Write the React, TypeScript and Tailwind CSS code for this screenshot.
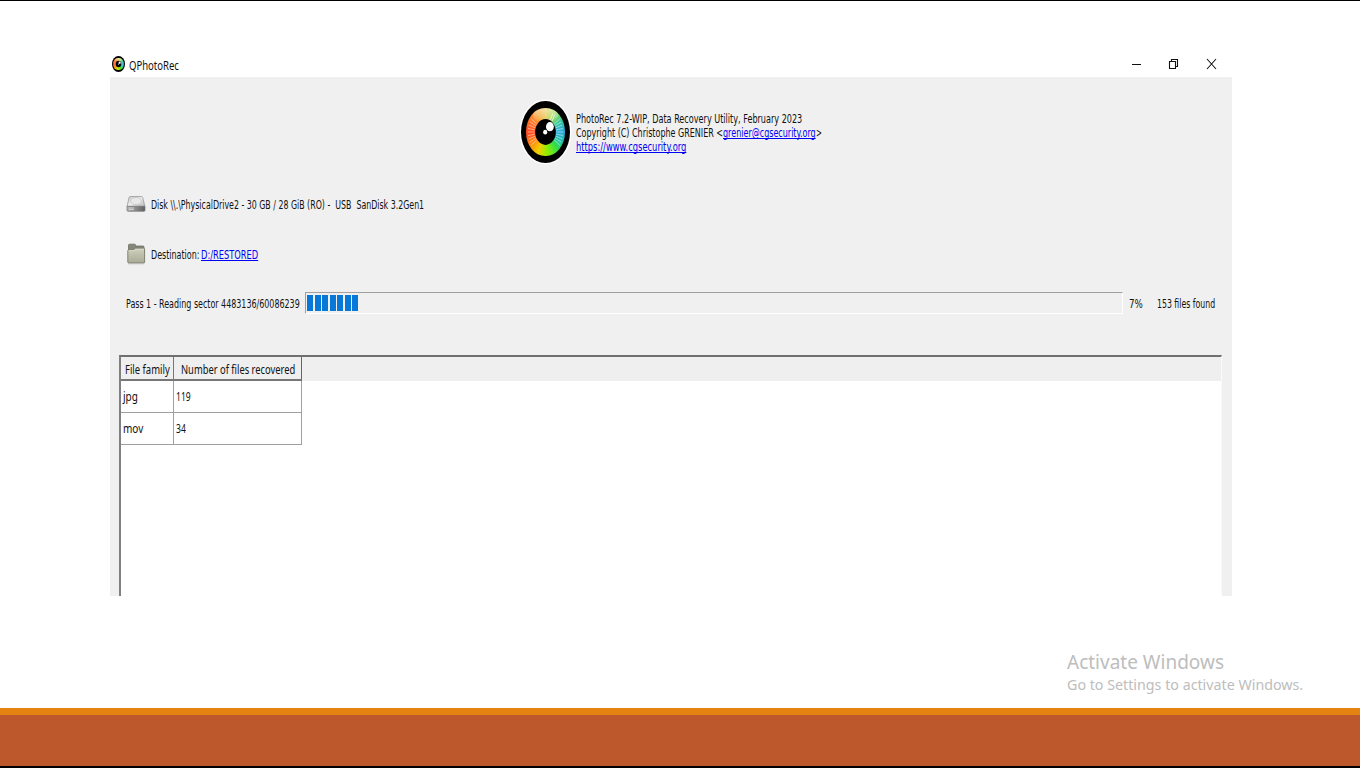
import { useLayoutEffect, useRef, useState } from "react";

type FitProps = { text: string; width: number; className?: string };

/** Single line of text condensed horizontally to a given width. */
function Fit({ text, width, className = "" }: FitProps) {
  const ref = useRef<HTMLSpanElement>(null);
  const [scale, setScale] = useState(1);
  useLayoutEffect(() => {
    if (ref.current) setScale(width / ref.current.offsetWidth);
  }, [text, width]);
  return (
    <span className={"block shrink-0 " + className} style={{ width }}>
      <span
        ref={ref}
        className="inline-block origin-left whitespace-pre"
        style={{ transform: `scaleX(${scale})` }}
      >
        {text}
      </span>
    </span>
  );
}

const link =
  "text-[#0000f5] [&>span]:underline [&>span]:underline-offset-[1px] [&>span]:decoration-1 [&>span]:[text-decoration-skip-ink:none]";

function Eye({ className }: { className: string }) {
  const rays = [];
  for (let i = -4; i <= 4; i++) {
    rays.push(i * 9, 180 + i * 9);
  }
  return (
    <div className={"relative shrink-0 rounded-[50%] bg-black " + className}>
      <div className="absolute inset-[11%] rounded-[50%] bg-[conic-gradient(#e8c850,#9edb55_25deg,#35c8a0_55deg,#28a8e0_90deg,#20c0b0_120deg,#35dd45_145deg,#90ee00_175deg,#f0d000_200deg,#ff8a10_230deg,#ff4a20_265deg,#ff6b25_300deg,#f5a535_335deg,#e8c850)]" />
      <svg className="absolute inset-0 size-full" viewBox="0 0 50 64" preserveAspectRatio="none">
        <defs>
          <linearGradient id="shine" x1="0" y1="0" x2="0" y2="1">
            <stop offset="0" stopColor="#fff" stopOpacity=".5" />
            <stop offset="1" stopColor="#fff" stopOpacity="0" />
          </linearGradient>
        </defs>
        <ellipse cx="25" cy="15" rx="13" ry="7.5" fill="url(#shine)" />
        <g stroke="#fff" strokeWidth=".7" strokeOpacity=".7">
          {rays.map((a) => {
            const c = Math.cos((a * Math.PI) / 180);
            const s = Math.sin((a * Math.PI) / 180);
            return <line key={a} x1={25 + c * 11} y1={32 + s * 14} x2={25 + c * 18} y2={32 + s * 23} />;
          })}
          <path d="M29.500 20l3-7M31.500 21l3-7" strokeWidth="1" />
        </g>
        <ellipse cx="25" cy="32" rx="10.500" ry="13.300" fill="#000" />
        <ellipse cx="29.500" cy="26.500" rx="4" ry="4.800" fill="#fff" />
        <ellipse cx="24.700" cy="32.200" rx="2.100" ry="2.400" fill="#fff" />
      </svg>
    </div>
  );
}

function DiskIcon() {
  return (
    <svg className="h-[18px] w-[20px] shrink-0" viewBox="0 0 20 18">
      <defs>
        <linearGradient id="disk" x1="0" y1="0" x2="1" y2="1">
          <stop offset="0" stopColor="#c8c8c8" />
          <stop offset=".5" stopColor="#eeeeee" />
          <stop offset="1" stopColor="#b4b4b4" />
        </linearGradient>
        <linearGradient id="diskFront" x1="0" y1="0" x2="1" y2="0">
          <stop offset="0" stopColor="#b5b5b5" />
          <stop offset="1" stopColor="#606060" />
        </linearGradient>
      </defs>
      <path d="M4.2 1.500h11.200q1 0 1.300 1l2.200 9H1l2.100-9q.2-1 1.100-1z" fill="url(#disk)" stroke="#999" strokeWidth=".8" />
      <ellipse cx="10" cy="6" rx="5.500" ry="3.600" fill="#e8e8e8" stroke="#c0c0c0" strokeWidth=".6" />
      <path d="M1 11.300h18v4q0 1-1 1H2q-1 0-1-1z" fill="url(#diskFront)" stroke="#777" strokeWidth=".7" />
      <path d="M3 13h5M3 14.500h5" stroke="#ececec" strokeWidth=".6" />
    </svg>
  );
}

function FolderIcon() {
  return (
    <svg className="h-[22px] w-[20px] shrink-0" viewBox="0 0 20 22">
      <defs>
        <linearGradient id="folder" x1="0" y1="0" x2="0" y2="1">
          <stop offset="0" stopColor="#d0d1bd" />
          <stop offset="1" stopColor="#a9ab96" />
        </linearGradient>
      </defs>
      <path d="M2.500 10V2.200q0-1 1-1h5q1 0 1 1v.8h7.500q1 0 1 1V10z" fill="#85877a" stroke="#6c6e60" strokeWidth=".8" />
      <path d="M1.800 8q0-1.300 1-1.300h5L9.400 5.200h8.200q1 0 1 1V19q0 1-1 1H2.800q-1 0-1-1z" fill="url(#folder)" stroke="#777968" strokeWidth=".9" />
      <path d="M2.700 8.200q0-.6.5-.6h5l1.500-1.400h8" fill="none" stroke="#e6e7da" strokeWidth=".7" />
      <path d="M2 20.800h16.500" stroke="#bbb" strokeWidth=".8" />
    </svg>
  );
}

function TitleBar() {
  return (
    <div className="flex h-[27px] items-center pl-[2px]">
      <Eye className="mt-px h-[16px] w-[13px]" />
      <Fit text="QPhotoRec" width={50} className="ml-[4px] mt-[4px] text-[12px]" />
      <div className="ml-auto mr-[15px] flex items-center">
        <svg className="h-[14px] w-[86px]" viewBox="0 0 86 14" fill="none" stroke="#111">
          <path d="M1 7.500h9" />
          <path d="M38.500 4.500h6v7h-6zM40.500 4.500v-2h6v7h-2" strokeWidth="1.100" />
          <path d="M76 2l9 10M85 2l-9 10" strokeWidth="1.100" />
        </svg>
      </div>
    </div>
  );
}

function ProgressBar() {
  return (
    <div className="ml-[5px] flex h-[22px] w-[818px] shrink-0 gap-[1.5px] border border-b-white border-l-[#a0a0a0] border-r-white border-t-[#a0a0a0] py-[2px] pl-[1px]">
      {Array.from({ length: 7 }, (_, i) => (
        <span key={i} className="h-[16px] w-[6px] bg-[#0878d8]" />
      ))}
    </div>
  );
}

function FileTable() {
  const rows = [
    ["jpg", 15, "119", 15],
    ["mov", 20, "34", 10],
  ] as const;
  return (
    <div className="ml-[9px] flex h-[241px] w-[1103px] flex-col border-l-2 border-r border-t-2 border-l-[#808080] border-r-[#fafafa] border-t-[#707070] bg-white font-['Noto_Sans',sans-serif] text-[12px]">
      <div className="flex h-[24px] shrink-0 bg-[#efefef]">
        <div className="flex w-[53px] items-center border-b-2 border-r border-b-[#777] border-r-[#777] pl-[4px] pt-[3px]">
          <Fit text="File family" width={45} />
        </div>
        <div className="flex w-[128px] items-center border-b-2 border-r border-b-[#777] border-r-[#666] pl-[7px] pt-[3px]">
          <Fit text="Number of files recovered" width={114} />
        </div>
      </div>
      {rows.map(([family, familyWidth, count, countWidth]) => (
        <div key={family} className="flex h-[32px] shrink-0">
          <div className="flex w-[53px] items-center border-b border-r border-[#a0a0a0] pl-[2px] pt-px">
            <Fit text={family} width={familyWidth} />
          </div>
          <div className="flex w-[128px] items-center border-b border-r border-[#a0a0a0] pl-[2px]">
            <Fit text={count} width={countWidth} />
          </div>
        </div>
      ))}
    </div>
  );
}

export default function App() {
  return (
    <div className="flex h-[768px] w-[1360px] flex-col overflow-hidden border-t border-black bg-white font-['Noto_Sans',sans-serif] text-[#111]">
      <main className="ml-[110px] mt-[49px] h-[546px] w-[1122px] shrink-0 overflow-hidden">
        <TitleBar />
        <div className="flex h-[519px] flex-col bg-[#f0f0f0] font-['DejaVu_Sans_Condensed','DejaVu_Sans',sans-serif] text-[11.8px] leading-[14px]">
          <header className="ml-[411px] mt-[22px] flex h-[66px] shrink-0 items-center">
            <Eye className="h-[62px] w-[49px] ring-[1.5px] ring-white" />
            <div className="ml-[6px] flex flex-col pt-[2px]">
              <Fit text="PhotoRec 7.2-WIP, Data Recovery Utility, February 2023" width={226} />
              <div className="flex">
                <Fit text="Copyright (C) Christophe GRENIER <" width={147} />
                <Fit text="grenier@cgsecurity.org" width={93} className={link} />
                <Fit text=">" width={6} />
              </div>
              <Fit text="https://www.cgsecurity.org" width={110} className={link} />
            </div>
          </header>
          <div className="ml-[16px] mt-[29px] flex h-[20px] shrink-0 items-center">
            <DiskIcon />
            <Fit text="Disk \\.\PhysicalDrive2 - 30 GB / 28 GiB (RO) -  USB  SanDisk 3.2Gen1" width={273} className="ml-[5px] mt-[2px]" />
          </div>
          <div className="ml-[16px] mt-[29px] flex h-[22px] shrink-0 items-center">
            <FolderIcon />
            <Fit text="Destination:" width={48} className="ml-[5px] mt-[2px]" />
            <Fit text="D:/RESTORED" width={57} className={"ml-[2px] mt-[2px] " + link} />
          </div>
          <div className="ml-[16px] mt-[27px] flex h-[22px] shrink-0 items-center">
            <Fit text="Pass 1 - Reading sector 4483136/60086239" width={174} className="mt-[2px]" />
            <ProgressBar />
            <Fit text="7%" width={14} className="ml-[6px] mt-[2px]" />
            <Fit text="153 files found" width={58} className="ml-[14px] mt-[2px]" />
          </div>
          <div className="mt-[41px] shrink-0">
            <FileTable />
          </div>
        </div>
      </main>
      <aside className="ml-[1067px] mt-[53px] flex h-[59px] shrink-0 flex-col text-[#bdbdbd]">
        <Fit text="Activate Windows" width={157} className="text-[19px] leading-[26px]" />
        <Fit text="Go to Settings to activate Windows." width={236} className="-mt-px text-[14.5px] leading-[20px]" />
      </aside>
      <footer className="h-[60px] shrink-0 border-b-2 border-t-[7px] border-b-black border-t-[#e48312] bg-[#bd582c]" />
    </div>
  );
}
